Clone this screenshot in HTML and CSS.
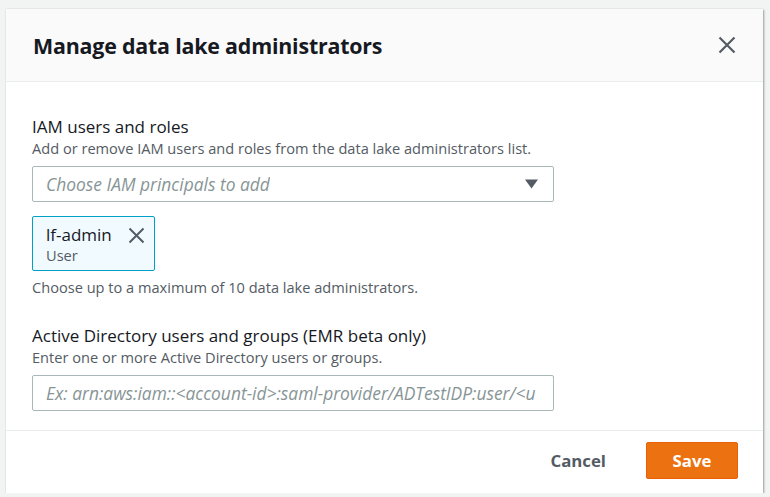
FILE: index.html
```html
<!DOCTYPE html>
<html>
<head>
<meta charset="utf-8">
<link rel="stylesheet" href="styles.css">
</head>
<body>
<div class="modal">
  <div class="modal-header">
    <h2 class="modal-title">Manage data lake administrators</h2>
    <button class="close-btn" aria-label="Close">
      <svg width="18" height="18" viewBox="0 0 18 18"><path d="M1.5 1.5 L16.5 16.5 M16.5 1.5 L1.5 16.5" stroke="#545b64" stroke-width="2.2" fill="none"/></svg>
    </button>
  </div>
  <div class="modal-body">
    <div class="field">
      <div class="label">IAM users and roles</div>
      <div class="desc">Add or remove IAM users and roles from the data lake administrators list.</div>
      <div class="select">
        <span class="placeholder">Choose IAM principals to add</span>
        <svg class="caret" width="13" height="10" viewBox="0 0 13 10"><path d="M0 0.5 H13 L6.5 9.5 Z" fill="#545b64"/></svg>
      </div>
      <div class="token">
        <div class="token-text">
          <div class="token-name">lf-admin</div>
          <div class="token-sub">User</div>
        </div>
        <svg class="token-x" width="17" height="17" viewBox="0 0 17 17"><path d="M1.5 1.5 L15.5 15.5 M15.5 1.5 L1.5 15.5" stroke="#545b64" stroke-width="2" fill="none"/></svg>
      </div>
      <div class="hint">Choose up to a maximum of 10 data lake administrators.</div>
    </div>
    <div class="field field-ad">
      <div class="label">Active Directory users and groups (EMR beta only)</div>
      <div class="desc">Enter one or more Active Directory users or groups.</div>
      <div class="input">
        <span class="placeholder">Ex: arn:aws:iam::&lt;account-id&gt;:saml-provider/ADTestIDP:user/&lt;u</span>
      </div>
    </div>
  </div>
  <div class="modal-footer">
    <button class="btn-cancel">Cancel</button>
    <button class="btn-save">Save</button>
  </div>
</div>
</body>
</html>
```

FILE: styles.css
```css
html, body {
  margin: 0;
  padding: 0;
  background: #f2f3f3;
  font-family: "Open Sans", "Noto Sans", "Liberation Sans", sans-serif;
  color: #16191f;
}

body {
  padding: 9px 0 0 6px;
}

.modal {
  width: 757px;
  height: 484px;
  background: #ffffff;
  box-shadow: 1px 1px 2px rgba(0,0,0,0.35), 0 0 1px rgba(0,0,0,0.15);
  display: flex;
  flex-direction: column;
}

.modal-header {
  height: 72px;
  flex: none;
  background: #fafafa;
  border-bottom: 1px solid #eaeded;
  display: flex;
  align-items: center;
  justify-content: space-between;
  padding: 0 27px 0 27px;
}

.modal-title {
  margin: 0;
  font-size: 21.4px;
  font-weight: 700;
  letter-spacing: -0.2px;
  color: #16191f;
}

.close-btn {
  background: none;
  border: none;
  padding: 0;
  width: 18px;
  height: 18px;
  display: flex;
}

.modal-body {
  flex: 1;
  padding: 34px 26px 0 26px;
  border-bottom: 1px solid #eaeded;
}

.field {
  width: 522px;
}

.field-ad {
  margin-top: 28px;
}

.label {
  font-size: 17px;
  line-height: 22px;
}

.desc {
  font-size: 14.6px;
  line-height: 20px;
  color: #545b64;
}

.select, .input {
  margin-top: 8px;
  height: 36px;
  box-sizing: border-box;
  border: 1px solid #aab7b8;
  border-radius: 2px;
  display: flex;
  align-items: center;
  justify-content: space-between;
  padding: 0 15px 0 13px;
  overflow: hidden;
  white-space: nowrap;
}

.placeholder {
  font-size: 17.4px;
  font-style: italic;
  color: #879596;
  overflow: hidden;
  white-space: nowrap;
}

.caret {
  flex: none;
}

.token {
  margin-top: 14px;
  width: 123px;
  height: 55px;
  box-sizing: border-box;
  border: 1px solid #00a1c9;
  border-radius: 2px;
  background: #f1faff;
  display: flex;
  align-items: flex-start;
  justify-content: space-between;
  padding: 7px 9px 0 13px;
}

.token-name {
  font-size: 17px;
  line-height: 21px;
}

.token-sub {
  font-size: 14.6px;
  line-height: 21px;
  color: #545b64;
}

.token-x {
  margin-top: 3px;
}

.hint {
  margin-top: 6px;
  font-size: 14.6px;
  line-height: 20px;
  color: #545b64;
}

.modal-footer {
  height: 62px;
  box-sizing: border-box;
  flex: none;
  display: flex;
  align-items: flex-start;
  justify-content: flex-end;
  padding: 11px 25px 0 0;
  gap: 40px;
}

.btn-cancel {
  background: none;
  border: none;
  font-family: inherit;
  font-size: 16.8px;
  font-weight: 700;
  color: #545b64;
  padding: 0;
  height: 37px;
}

.btn-save {
  width: 92px;
  height: 37px;
  background: #ec7211;
  border: 1px solid #eb5f07;
  border-radius: 2px;
  color: #ffffff;
  font-family: inherit;
  font-size: 16.8px;
  font-weight: 700;
}
```
